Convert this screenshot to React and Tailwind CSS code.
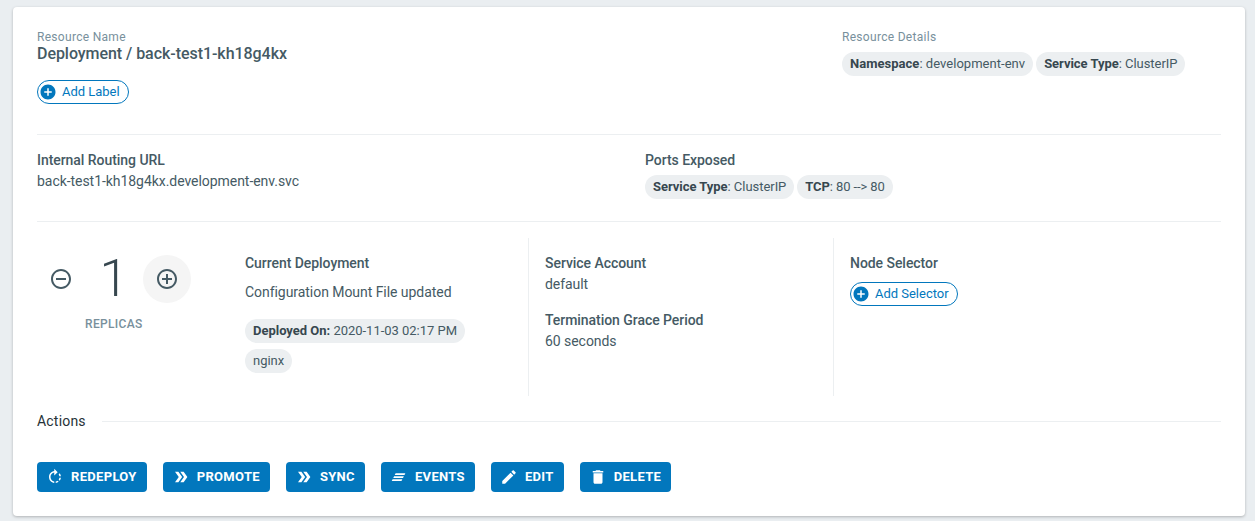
const ADD_CIRCLE = "M12 2C6.48 2 2 6.48 2 12s4.48 10 10 10 10-4.48 10-10S17.52 2 12 2zm5 11h-4v4h-2v-4H7v-2h4V7h2v4h4v2z";
const MINUS_OUTLINE = "M7 11v2h10v-2H7zm5-9C6.48 2 2 6.48 2 12s4.48 10 10 10 10-4.48 10-10S17.52 2 12 2zm0 18c-4.41 0-8-3.59-8-8s3.59-8 8-8 8 3.59 8 8-3.59 8-8 8z";
const PLUS_OUTLINE = "M13 7h-2v4H7v2h4v4h2v-4h4v-2h-4V7zm-1-5C6.48 2 2 6.48 2 12s4.48 10 10 10 10-4.48 10-10S17.52 2 12 2zm0 18c-4.41 0-8-3.59-8-8s3.59-8 8-8 8 3.59 8 8-3.59 8-8 8z";
const ROTATE = "M15.55 5.55L11 1v3.07C7.06 4.56 4 7.92 4 12s3.05 7.44 7 7.93v-2.02c-2.84-.48-5-2.94-5-5.91s2.16-5.43 5-5.91V10l4.55-4.45zM19.93 11c-.17-1.39-.72-2.73-1.62-3.89l-1.42 1.42c.54.75.88 1.6 1.02 2.47h2.02zM13 17.9v2.02c1.39-.17 2.74-.71 3.9-1.61l-1.44-1.44c-.75.54-1.59.89-2.46 1.03zm3.89-2.42l1.42 1.41c.9-1.16 1.45-2.5 1.62-3.89h-2.02c-.14.87-.48 1.72-1.02 2.48z";
const DOUBLE_ARROW = "M15.5 5H11l5 7-5 7h4.5l5-7zM8.5 5H4l5 7-5 7h4.5l5-7z";
const EVENTS = "M7.5 7h13l-1.2 2.2h-13zM5.5 11h13l-1.2 2.2h-13zM3.5 15h13l-1.2 2.2h-13z";
const EDIT = "M3 17.25V21h3.75L17.81 9.94l-3.75-3.75L3 17.25zM20.71 7.04c.39-.39.39-1.02 0-1.41l-2.34-2.34c-.39-.39-1.02-.39-1.41 0l-1.83 1.83 3.75 3.75 1.83-1.83z";
const TRASH = "M6 19c0 1.1.9 2 2 2h8c1.1 0 2-.9 2-2V7H6v12zM19 4h-3.5l-1-1h-5l-1 1H5v2h14V4z";

function Icon({ d, className }) {
  return (
    <svg viewBox="0 0 24 24" fill="currentColor" className={className}>
      <path d={d} />
    </svg>
  );
}

function Chip({ label, value, tracking = "tracking-[-0.04px]" }) {
  return (
    <span className={`inline-flex h-6 items-center rounded-full bg-[#eceff1] px-2 text-[13px] whitespace-pre text-[#455a64] ${tracking}`}>
      {label && <b className="font-bold text-[#37474f]">{label}</b>}
      {value}
    </span>
  );
}

function AddChip({ text }) {
  return (
    <span className="inline-flex h-6 items-center rounded-full border border-[#0277bd] pr-2 text-[13px] tracking-[-0.02px] text-[#0277bd]">
      <Icon d={ADD_CIRCLE} className="ml-[1px] mr-[5px] h-[18px] w-[18px]" />
      {text}
    </span>
  );
}

function ActionButton({ icon, text }) {
  return (
    <button className="flex h-[30px] items-center gap-[7px] rounded-[4px] bg-[#0277bd] pr-[10px] pl-[9px] text-[13px] font-bold tracking-[0.32px] text-white">
      <Icon d={icon} className="h-[18px] w-[18px]" />
      {text}
    </button>
  );
}

export default function App() {
  return (
    <div className="h-[521px] w-[1255px] overflow-hidden bg-[#eaeef1] pt-[7px] pr-[10px] pl-[13px] font-['Roboto',sans-serif] text-sm tracking-[-0.05px] text-[#455a64]">
      <div className="h-[509px] rounded-[4px] bg-white px-6 shadow-[0_1px_3px_rgba(0,0,0,0.25)]">
        <div className="flex h-[128px] border-b border-[#eceff1] pt-[23px]">
          <div className="w-[805px]">
            <p className="text-xs leading-[14px] tracking-[0.3px] text-[#78909c]">Resource Name</p>
            <p className="text-base leading-[20px] font-medium text-[#455a64]">Deployment / back-test1-kh18g4kx</p>
            <div className="mt-4">
              <AddChip text="Add Label" />
            </div>
          </div>
          <div>
            <p className="text-xs leading-[14px] tracking-[0.3px] text-[#78909c]">Resource Details</p>
            <div className="mt-2 flex gap-[3px]">
              <Chip label="Namespace" value=": development-env" tracking="tracking-[0.03px]" />
              <Chip label="Service Type" value=": ClusterIP" />
            </div>
          </div>
        </div>

        <div className="flex h-[87px] border-b border-[#eceff1] pt-[15px]">
          <div className="w-[608px]">
            <p className="leading-[20px] font-medium">Internal Routing URL</p>
            <p className="mt-[1px] leading-[20px]">back-test1-kh18g4kx.development-env.svc</p>
          </div>
          <div>
            <p className="leading-[20px] font-medium">Ports Exposed</p>
            <div className="mt-[5px] flex gap-[3px]">
              <Chip label="Service Type" value=": ClusterIP" />
              <Chip label="TCP" value=": 80 --> 80" tracking="tracking-[-0.1px]" />
            </div>
          </div>
        </div>

        <div className="mt-4 flex h-[158px]">
          <div className="flex w-[492px] border-r border-[#eceff1]">
            <div className="w-[208px] pt-[17px]">
              <div className="flex h-12 items-center">
                <Icon d={MINUS_OUTLINE} className="ml-[12px] h-6 w-6 text-[#455a64]" />
                <span className="w-[70px] pl-[12px] text-center text-[52px] leading-[48px] font-[350] text-[#37474f]">1</span>
                <span className="flex h-12 w-12 items-center justify-center rounded-full bg-[#f5f5f5]">
                  <Icon d={PLUS_OUTLINE} className="h-6 w-6 text-[#455a64]" />
                </span>
              </div>
              <p className="mt-[14px] ml-[48px] text-xs leading-[14px] font-medium tracking-[0.35px] text-[#78909c]">REPLICAS</p>
            </div>
            <div className="pt-[15px]">
              <p className="leading-[20px] font-medium">Current Deployment</p>
              <p className="mt-[9px] leading-[20px]">Configuration Mount File updated</p>
              <div className="mt-[17px] flex flex-col items-start gap-[6px]">
                <Chip label="Deployed On:" value=" 2020-11-03 02:17 PM" tracking="tracking-[-0.02px]" />
                <Chip value="nginx" />
              </div>
            </div>
          </div>
          <div className="w-[305px] border-r border-[#eceff1] pt-[15px] pl-4">
            <p className="leading-[20px] font-medium">Service Account</p>
            <p className="mt-[1px] leading-[20px]">default</p>
            <p className="mt-4 leading-[20px] font-medium">Termination Grace Period</p>
            <p className="mt-[1px] leading-[20px]">60 seconds</p>
          </div>
          <div className="pt-[15px] pl-4">
            <p className="leading-[20px] font-medium">Node Selector</p>
            <div className="mt-[9px]">
              <AddChip text="Add Selector" />
            </div>
          </div>
        </div>

        <div className="mt-[15px] flex h-5 items-center gap-4">
          <span className="leading-[20px] font-normal tracking-[0.2px] text-[#263238]">Actions</span>
          <span className="h-px flex-1 bg-[#eceff1]" />
        </div>

        <div className="mt-[31px] flex gap-4">
          <ActionButton icon={ROTATE} text="REDEPLOY" />
          <ActionButton icon={DOUBLE_ARROW} text="PROMOTE" />
          <ActionButton icon={DOUBLE_ARROW} text="SYNC" />
          <ActionButton icon={EVENTS} text="EVENTS" />
          <ActionButton icon={EDIT} text="EDIT" />
          <ActionButton icon={TRASH} text="DELETE" />
        </div>
      </div>
    </div>
  );
}
